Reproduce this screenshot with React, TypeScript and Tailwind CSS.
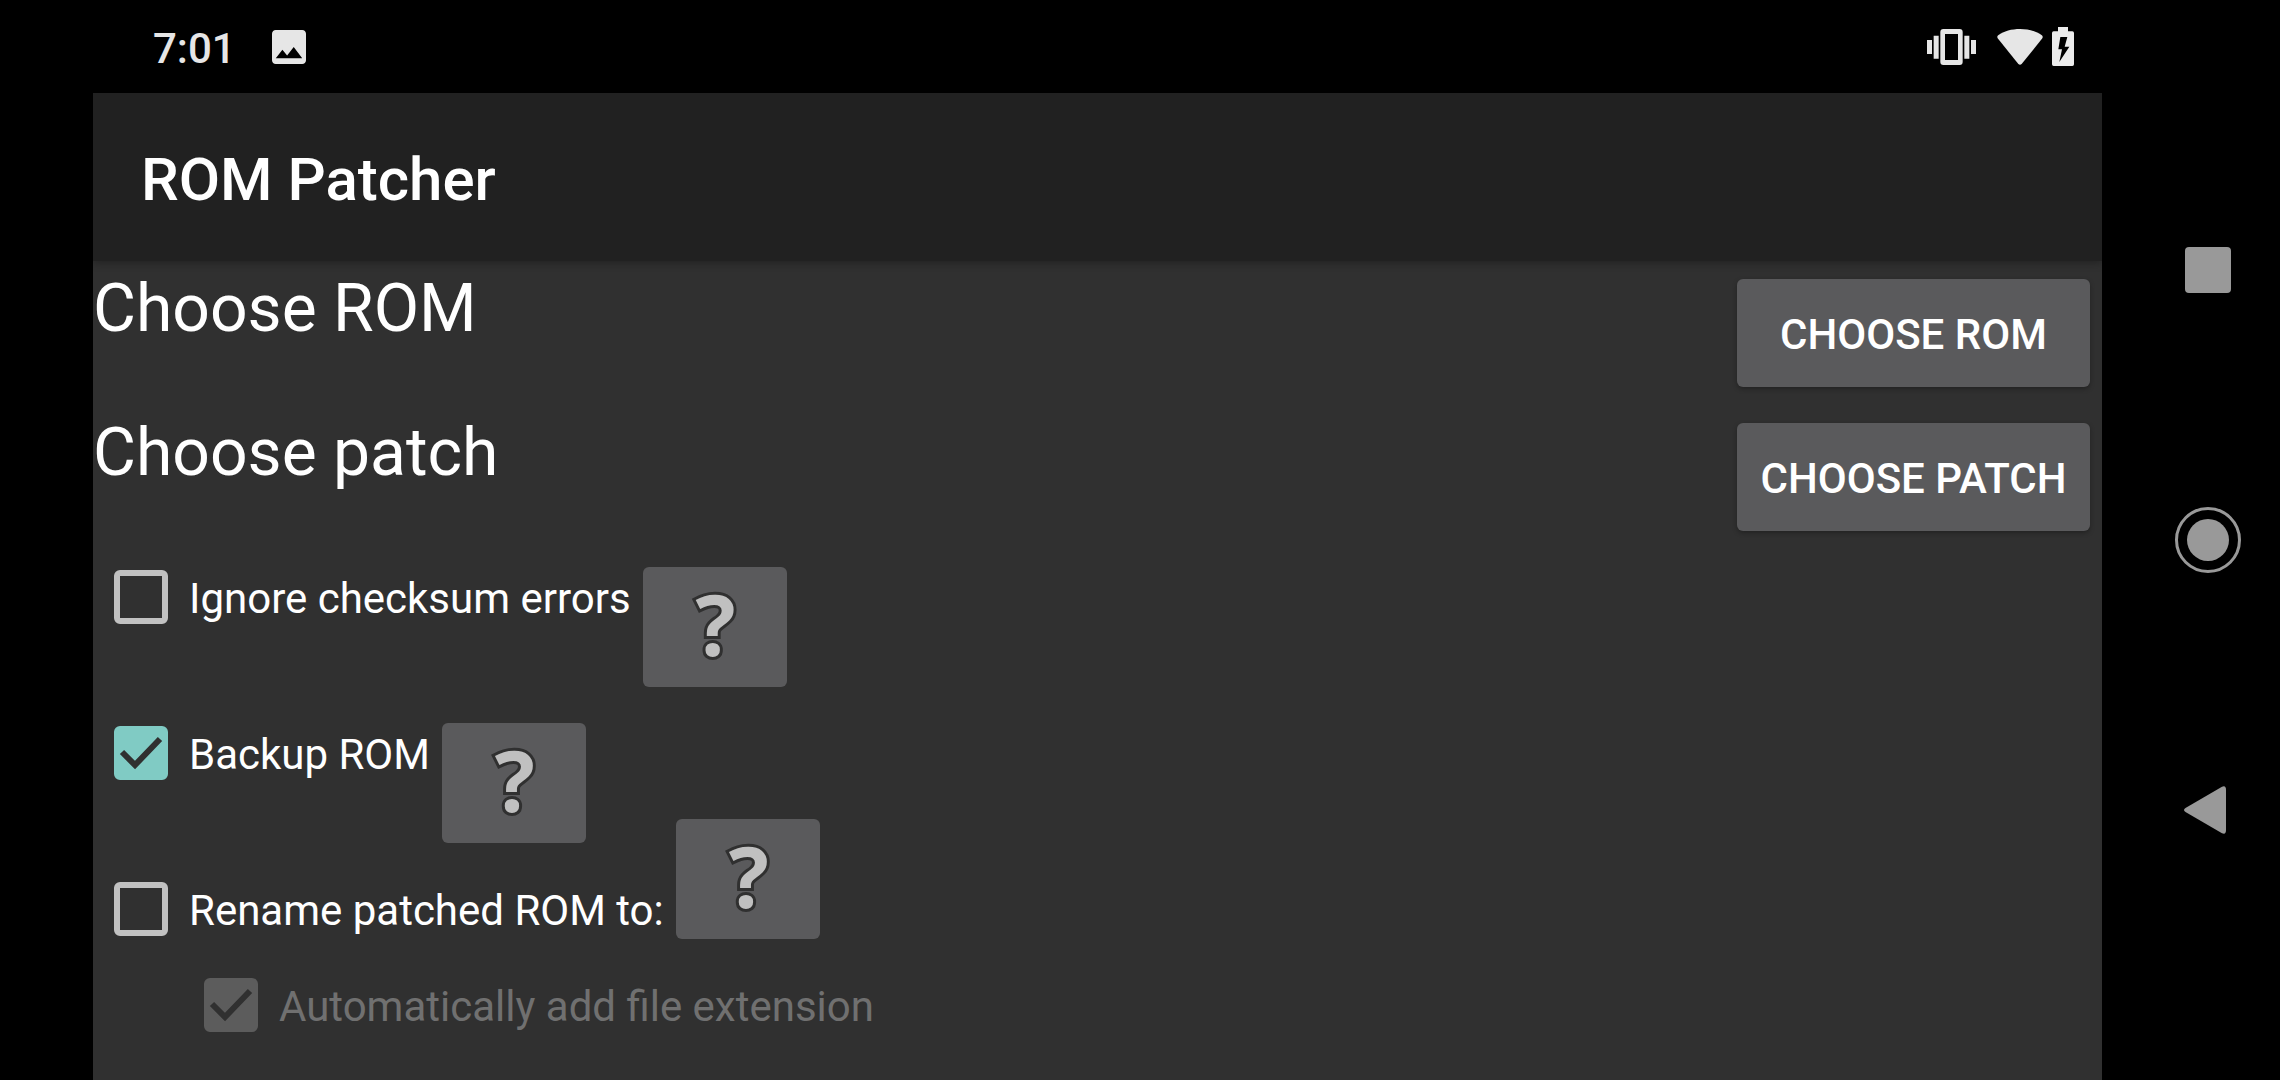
import { useId, useState, type ReactNode } from "react";

function ImageIcon() {
  return (
    <svg viewBox="3 3 18 18" className="size-[34px] fill-[#e6e6e6]" aria-hidden="true">
      <path d="M21 19V5c0-1.1-.9-2-2-2H5c-1.1 0-2 .9-2 2v14c0 1.100.9 2 2 2h14c1.100 0 2-.9 2-2zM8.500 13.500l2.500 3.010L14.500 12l4.500 6H5l3.500-4.500z" />
    </svg>
  );
}

function VibrateIcon() {
  return (
    <svg viewBox="0 0 147 108" className="h-9 w-[49px] fill-[#e6e6e6]" aria-hidden="true">
      <path d="M0 33h15v42H0zM20 20h15v69H20zM112 20h15v69h-15zM132 33h15v42h-15z" />
      <path
        fillRule="evenodd"
        d="M49 0h49q9 0 9 9v90q0 9-9 9H49q-9 0-9-9V9q0-9 9-9zM54 15v78h39V15z"
      />
    </svg>
  );
}

function WifiIcon() {
  return (
    <svg viewBox="0 0 138 109" className="h-9 w-[46px] fill-[#e6e6e6]" aria-hidden="true">
      <path d="M3 19C20 6 44 0 69 0s49 6 66 19q5 4 1 10L74 106q-5 5-10 0L2 29q-4-6 1-10z" />
    </svg>
  );
}

function BatteryIcon() {
  return (
    <svg viewBox="0 0 66 117" className="h-[39px] w-[22px] fill-[#ececec]" aria-hidden="true">
      <path
        fillRule="evenodd"
        d="M18 0h30v13h13q5 0 5 5v94q0 5-5 5H5q-5 0-5-5V18q0-5 5-5h13zM25 30L19 67h11l-8 38 30-46H38l8-29z"
      />
    </svg>
  );
}

function NavButton({ label, children }: { label: string; children: ReactNode }) {
  return (
    <button type="button" aria-label={label} className="flex w-full flex-1 items-center justify-center">
      {children}
    </button>
  );
}

function NavigationBar() {
  return (
    <nav className="flex w-36 shrink-0 flex-col py-[135px]">
      <NavButton label="Recent apps">
        <span className="size-[46px] rounded-[4px] bg-[#999999]" />
      </NavButton>
      <NavButton label="Home">
        <span className="flex size-[66px] items-center justify-center rounded-full border-3 border-[#999999]">
          <span className="size-[42px] rounded-full bg-[#999999]" />
        </span>
      </NavButton>
      <NavButton label="Back">
        <svg viewBox="0 0 48 48" className="size-12 fill-[#999999]" aria-hidden="true">
          <path d="M1.500 22L38 .8Q42 -1 42 4v40q0 5-4 3.200L1.500 26Q-1.500 24 1.500 22z" />
        </svg>
      </NavButton>
    </nav>
  );
}

function ChooserRow({ title, action }: { title: string; action: string }) {
  return (
    <div className="flex h-36 items-start justify-between pr-3">
      <h2 className="text-[66px] leading-24">{title}</h2>
      <button
        type="button"
        className="my-[18px] h-[108px] w-[353px] rounded-md bg-[#5a5a5c] pt-1 text-[42px] leading-12 font-medium uppercase shadow-[0_2px_5px_rgba(0,0,0,0.3)]"
      >
        {action}
      </button>
    </div>
  );
}

function HelpButton({ topic }: { topic: string }) {
  return (
    <button
      type="button"
      aria-label={"Help: " + topic}
      className="my-[18px] ml-3 flex h-[120px] w-36 shrink-0 items-center justify-center rounded-md bg-[#5a5a5c] pb-1.5 pl-0.5 font-['Open_Sans',sans-serif] text-[84px] leading-28 font-bold text-[#c0c0c0] [-webkit-text-stroke:6px_#303030] [paint-order:stroke_fill]"
    >
      ?
    </button>
  );
}

function CheckOption({
  label,
  initial = false,
  disabled = false,
}: {
  label: string;
  initial?: boolean;
  disabled?: boolean;
}) {
  const id = useId();
  const [checked, setChecked] = useState(initial);
  return (
    <div className="flex h-24 items-center">
      <span className="ml-[21px] grid size-[54px]">
        <input
          id={id}
          type="checkbox"
          checked={checked}
          disabled={disabled}
          onChange={(e) => setChecked(e.target.checked)}
          className="peer col-start-1 row-start-1 size-[54px] appearance-none rounded-md border-6 border-[#c1c1c1] checked:border-[#80cbc4] checked:bg-[#80cbc4] disabled:border-[#5c5c5c] disabled:checked:border-[#5c5c5c] disabled:checked:bg-[#5c5c5c]"
        />
        <svg
          viewBox="0 0 54 54"
          className="pointer-events-none invisible col-start-1 row-start-1 size-[54px] fill-none stroke-[#303030] stroke-6 peer-checked:visible"
          aria-hidden="true"
        >
          <path d="M8 26l13 13 25-26" />
        </svg>
      </span>
      <label htmlFor={id} className={disabled ? "pt-1 pl-[21px] text-[#707070]" : "pt-1 pl-[21px]"}>
        {label}
      </label>
    </div>
  );
}

export default function App() {
  return (
    <div className="flex min-h-screen bg-black font-[Roboto,sans-serif] text-white">
      <div className="mr-[34px] ml-[93px] flex min-w-0 flex-1 flex-col">
        <div className="flex h-[93px] items-center pr-7 pl-15 text-[#e6e6e6]">
          <time className="mr-9 pt-1 text-[42px] leading-12 font-medium">7:01</time>
          <ImageIcon />
          <div className="ml-auto flex items-center">
            <VibrateIcon />
            <span className="mr-[9px] ml-[21px]">
              <WifiIcon />
            </span>
            <BatteryIcon />
          </div>
        </div>
        <header className="z-10 flex h-[168px] items-center bg-[#212121] px-12 pt-1.5 shadow-[0_2px_8px_rgba(0,0,0,0.3)]">
          <h1 className="text-[60px] leading-18 font-medium">ROM Patcher</h1>
        </header>
        <main className="flex flex-1 flex-col bg-[#303030] text-[42px] leading-12">
          <ChooserRow title="Choose ROM" action="Choose ROM" />
          <ChooserRow title="Choose patch" action="Choose patch" />
          <div className="flex items-start">
            <CheckOption label="Ignore checksum errors" />
            <HelpButton topic="Ignore checksum errors" />
          </div>
          <div className="flex items-start">
            <CheckOption label="Backup ROM" initial />
            <HelpButton topic="Backup ROM" />
          </div>
          <div className="flex h-24 items-end">
            <CheckOption label="Rename patched ROM to:" />
            <HelpButton topic="Rename patched ROM to" />
          </div>
          <div className="pl-[90px]">
            <CheckOption label="Automatically add file extension" initial disabled />
          </div>
        </main>
      </div>
      <NavigationBar />
    </div>
  );
}
